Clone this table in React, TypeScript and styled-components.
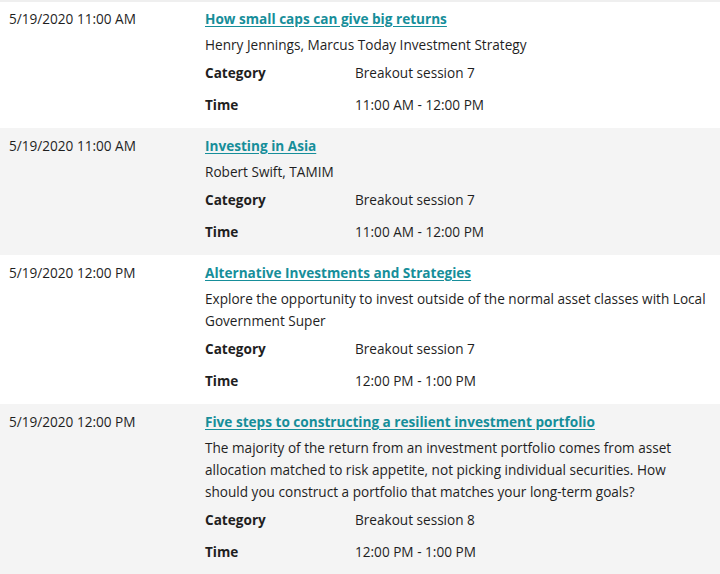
import React from "react";
import styled, { createGlobalStyle } from "styled-components";

const Global = createGlobalStyle`
  html, body { margin: 0; padding: 0; background: #ffffff; }
  body { font-family: "Open Sans", "Noto Sans", sans-serif; color: #1f1f1f; }
`;

const List = styled.div`
  border-top: 2px solid #efefef;
  width: 720px;
`;

const Row = styled.div<{ $shaded: boolean }>`
  display: grid;
  grid-template-columns: 196px 1fr;
  padding: 7px 10px 12px 9px;
  background: ${(p) => (p.$shaded ? "#f4f4f4" : "#ffffff")};
  font-size: 13.6px;
  line-height: 22px;
  &:first-child {
    padding-top: 6px;
  }
`;

const DateCell = styled.div`
  white-space: nowrap;
`;

const Body = styled.div`
  display: flex;
  flex-direction: column;
`;

const Title = styled.a`
  font-weight: 700;
  color: #168e9a;
  text-decoration: underline;
  text-underline-offset: 2px;
  align-self: flex-start;
`;

const Desc = styled.p`
  margin: 4px 0 0;
`;

const Details = styled.dl`
  display: grid;
  grid-template-columns: 150px 1fr;
  row-gap: 10px;
  margin: 6px 0 0;
`;

const Term = styled.dt`
  font-weight: 700;
`;

const Value = styled.dd`
  margin: 0;
`;

const sessions = [
  {
    date: "5/19/2020 11:00 AM",
    title: "How small caps can give big returns",
    desc: "Henry Jennings, Marcus Today Investment Strategy",
    category: "Breakout session 7",
    time: "11:00 AM - 12:00 PM",
  },
  {
    date: "5/19/2020 11:00 AM",
    title: "Investing in Asia",
    desc: "Robert Swift, TAMIM",
    category: "Breakout session 7",
    time: "11:00 AM - 12:00 PM",
  },
  {
    date: "5/19/2020 12:00 PM",
    title: "Alternative Investments and Strategies",
    desc: "Explore the opportunity to invest outside of the normal asset classes with Local Government Super",
    category: "Breakout session 7",
    time: "12:00 PM - 1:00 PM",
  },
  {
    date: "5/19/2020 12:00 PM",
    title: "Five steps to constructing a resilient investment portfolio",
    desc: "The majority of the return from an investment portfolio comes from asset allocation matched to risk appetite, not picking individual securities. How should you construct a portfolio that matches your long-term goals?",
    category: "Breakout session 8",
    time: "12:00 PM - 1:00 PM",
  },
];

export default function App() {
  return (
    <>
      <Global />
      <List>
        {sessions.map((s, i) => (
          <Row key={i} $shaded={i % 2 === 1}>
            <DateCell>{s.date}</DateCell>
            <Body>
              <Title href="#">{s.title}</Title>
              <Desc>{s.desc}</Desc>
              <Details>
                <Term>Category</Term>
                <Value>{s.category}</Value>
                <Term>Time</Term>
                <Value>{s.time}</Value>
              </Details>
            </Body>
          </Row>
        ))}
      </List>
    </>
  );
}
